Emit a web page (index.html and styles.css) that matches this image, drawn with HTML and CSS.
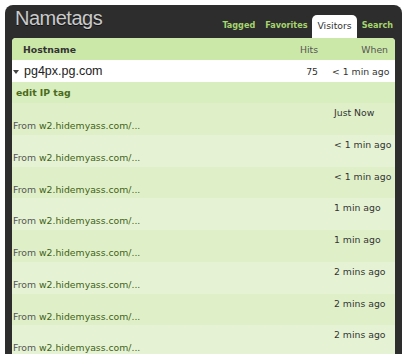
FILE: index.html
```html
<!DOCTYPE html>
<html lang="en">
<head>
    <meta charset="UTF-8">
    <meta name="viewport" content="width=device-width, initial-scale=1.0">
    <title>Nametags</title>
    <link rel="stylesheet" href="styles.css">
</head>
<body>

    <div class="panel">
        <div class="top">
            <h1 class="title">Nametags</h1>
            <div class="tabs">
                <span class="tab">Tagged</span>
                <span class="tab">Favorites</span>
                <span class="tab active">Visitors</span>
                <span class="tab">Search</span>
            </div>
        </div>

        <div class="content">
            <div class="head">
                <span class="col-host">Hostname</span>
                <span class="col-hits">Hits</span>
                <span class="col-when">When</span>
            </div>
            <div class="host">
                <span class="col-host"><span class="arrow"></span>pg4px.pg.com</span>
                <span class="col-hits">75</span>
                <span class="col-when">&lt; 1 min ago</span>
            </div>
            <div class="edit">edit IP tag</div>

            <div class="visit">
                <div class="time">Just Now</div>
                <div class="from">From <a href="#">w2.hidemyass.com/...</a></div>
            </div>
            <div class="visit odd">
                <div class="time">&lt; 1 min ago</div>
                <div class="from">From <a href="#">w2.hidemyass.com/...</a></div>
            </div>
            <div class="visit">
                <div class="time">&lt; 1 min ago</div>
                <div class="from">From <a href="#">w2.hidemyass.com/...</a></div>
            </div>
            <div class="visit odd">
                <div class="time">1 min ago</div>
                <div class="from">From <a href="#">w2.hidemyass.com/...</a></div>
            </div>
            <div class="visit">
                <div class="time">1 min ago</div>
                <div class="from">From <a href="#">w2.hidemyass.com/...</a></div>
            </div>
            <div class="visit odd">
                <div class="time">2 mins ago</div>
                <div class="from">From <a href="#">w2.hidemyass.com/...</a></div>
            </div>
            <div class="visit">
                <div class="time">2 mins ago</div>
                <div class="from">From <a href="#">w2.hidemyass.com/...</a></div>
            </div>
            <div class="visit odd">
                <div class="time">2 mins ago</div>
                <div class="from">From <a href="#">w2.hidemyass.com/...</a></div>
            </div>
        </div>
    </div>

</body>
</html>
```

FILE: styles.css
```css
body {
    margin: 0;
    background-color: #fff;
    font-family: "DejaVu Sans", sans-serif;
    font-size: 9.3px;
    color: #444;
}
.panel {
    width: 383px;
    margin: 5px 0 0 5px;
    padding: 0 7px 20px;
    background-color: #2d2d2d;
    border-radius: 8px 8px 0 0;
}
.top {
    display: flex;
    align-items: flex-end;
    height: 33px;
}
.title {
    align-self: flex-start;
    margin: 2px 0 0 3px;
    font-family: "Liberation Sans", Arial, sans-serif;
    font-size: 20px;
    font-weight: normal;
    letter-spacing: -0.5px;
    color: #cacaca;
    text-shadow: 0 1px 0 #111;
}
.tabs {
    display: flex;
    margin-left: auto;
    margin-right: -3px;
}
.tab {
    padding: 0 5px;
    height: 23px;
    line-height: 21px;
    font-family: "DejaVu Sans Condensed", "DejaVu Sans", sans-serif;
    font-size: 9px;
    font-weight: bold;
    color: #a6d46e;
}
.tab.active {
    padding: 0 5px;
    background-color: #fff;
    font-family: "DejaVu Sans", sans-serif;
    font-size: 9.3px;
    font-weight: normal;
    color: #333;
    border-radius: 5px 5px 0 0;
}
.content {
    background-color: #e3f2d0;
    border-radius: 4px 4px 0 0;
    overflow: hidden;
}
.head,
.host {
    display: grid;
    grid-template-columns: 1fr 40px 72px;
    align-items: center;
    height: 22px;
}
.head {
    background-color: #cce8a8;
    color: #555;
}
.head .col-host {
    padding-left: 11px;
    font-weight: bold;
    color: #333;
}
.col-hits {
    text-align: right;
    padding-right: 5px;
}
.head .col-when {
    text-align: right;
    padding-right: 7px;
}
.host {
    background-color: #fff;
    color: #333;
}
.host .col-host {
    display: flex;
    align-items: center;
    font-family: "Liberation Sans", Arial, sans-serif;
    font-size: 12.5px;
    color: #222;
}
.host .col-when {
    padding-left: 9px;
}
.arrow {
    width: 0;
    height: 0;
    margin: 1px 5px 0 1px;
    border-left: 3px solid transparent;
    border-right: 3px solid transparent;
    border-top: 4px solid #444;
}
.edit {
    height: 21px;
    line-height: 21px;
    padding-left: 4px;
    background-color: #d9eebf;
    font-weight: bold;
    color: #4b6b1c;
}
.visit {
    height: 31.75px;
    box-sizing: border-box;
    padding-top: 3px;
    background-color: #dff0c9;
}
.visit.odd {
    background-color: #e5f3d4;
}
.time {
    padding-left: 322px;
    line-height: 13px;
    color: #333;
}
.from {
    padding-left: 1px;
    line-height: 13px;
    color: #555;
}
.from a {
    color: #3f6114;
    text-decoration: none;
}
```
